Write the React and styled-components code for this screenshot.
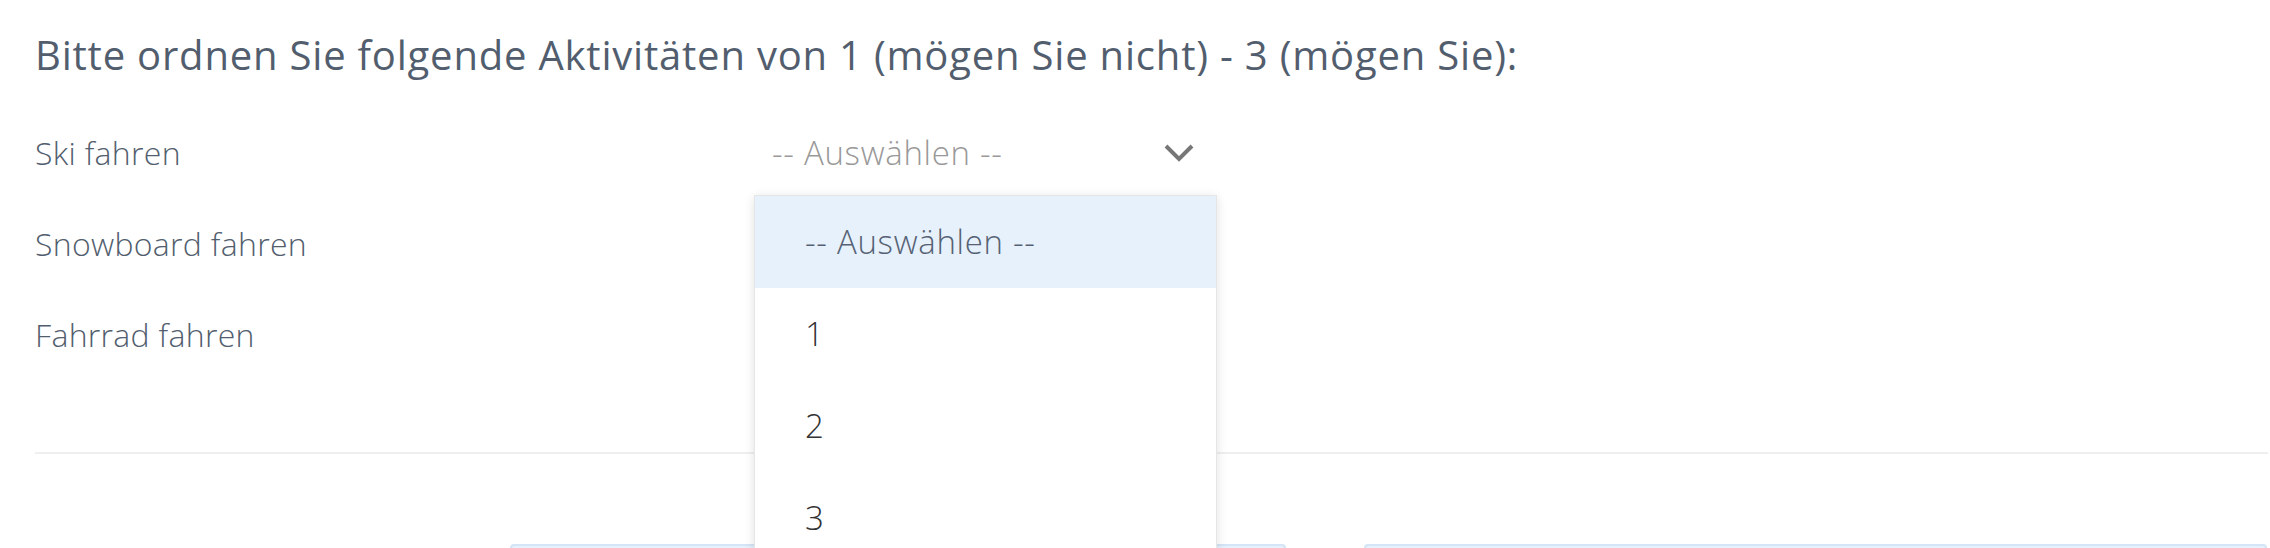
import React, { useState } from 'react';
import styled, { createGlobalStyle } from 'styled-components';

const GlobalStyle = createGlobalStyle`
	html, body {
		margin: 0;
		padding: 0;
		background: #ffffff;
		font-family: 'Open Sans', 'Noto Sans', sans-serif;
	}
`;

const Page = styled.div`
	padding: 27px 2px 0 35px;
	overflow: hidden;
	height: 548px;
	box-sizing: border-box;
`;

const Title = styled.h2`
	margin: 0 0 24px;
	font-size: 40px;
	line-height: 56px;
	font-weight: 400;
	color: #525e6e;
	letter-spacing: 0.8px;
	white-space: nowrap;
`;

const Rows = styled.div`
	display: flex;
	flex-direction: column;
`;

const Row = styled.div`
	display: grid;
	grid-template-columns: 719px 463px;
	align-items: center;
	height: 91px;
`;

const Label = styled.span`
	font-size: 32px;
	font-weight: 300;
	color: #525e6e;
	letter-spacing: 0.3px;
`;

const SelectWrap = styled.div`
	position: relative;
	z-index: ${(props) => (props.open ? 5 : 1)};
`;

const Trigger = styled.div`
	display: flex;
	align-items: center;
	justify-content: space-between;
	height: 84px;
	padding: 0 22px 0 18px;
	cursor: pointer;
	font-size: 33px;
	font-weight: 300;
	color: ${(props) => (props.empty ? '#999999' : '#333333')};
	letter-spacing: 0.7px;
`;

const Chevron = styled.svg`
	width: 32px;
	height: 20px;
	flex-shrink: 0;
`;

const Menu = styled.ul`
	position: absolute;
	top: 100%;
	left: 0;
	right: 0;
	margin: 0;
	padding: 0;
	list-style: none;
	background: #ffffff;
	border: 1px solid #e6e6e6;
	box-shadow: 0 2px 10px rgba(0, 0, 0, 0.12);
`;

const Option = styled.li`
	display: flex;
	align-items: center;
	height: 92px;
	padding: 0 0 0 50px;
	font-size: 33px;
	font-weight: 300;
	letter-spacing: 0.7px;
	color: ${(props) => (props.placeholder ? '#566274' : '#333333')};
	background: ${(props) => (props.active ? '#e6f1fc' : '#ffffff')};
	cursor: pointer;
`;

const Divider = styled.hr`
	margin: 72px 0 0;
	border: 0;
	border-top: 2px solid #efefef;
`;

const Actions = styled.div`
	display: flex;
	gap: 78px;
	margin-top: 90px;
	padding-left: 475px;
`;

const ActionButton = styled.button`
	width: ${(props) => props.width}px;
	height: 64px;
	background: #e7f1fc;
	border: 2px solid #d4e5f7;
	border-radius: 4px;
	font-family: inherit;
`;

const activities = ['Ski fahren', 'Snowboard fahren', 'Fahrrad fahren'];
const choices = ['1', '2', '3'];

function Select({ open, onToggle }) {
	const [ value, setValue ] = useState('');

	return (
		<SelectWrap open={open}>
			<Trigger empty={!value} onClick={onToggle}>
				<span>{value || '-- Auswählen --'}</span>
				<Chevron viewBox="0 0 32 20" fill="none">
					<path d="M3 3 L16 16 L29 3" stroke="#777777" strokeWidth="4" />
				</Chevron>
			</Trigger>
			{open && (
				<Menu>
					<Option placeholder active={!value} onClick={() => setValue('')}>
						-- Auswählen --
					</Option>
					{choices.map((c) => (
						<Option key={c} active={value === c} onClick={() => setValue(c)}>
							{c}
						</Option>
					))}
				</Menu>
			)}
		</SelectWrap>
	);
}

function App() {
	const [ openIndex, setOpenIndex ] = useState(0);

	return (
		<Page>
			<GlobalStyle />
			<Title>Bitte ordnen Sie folgende Aktivitäten von 1 (mögen Sie nicht) - 3 (mögen Sie):</Title>
			<Rows>
				{activities.map((a, i) => (
					<Row key={a}>
						<Label>{a}</Label>
						{i === 0 ? (
							<Select open={openIndex === i} onToggle={() => setOpenIndex(openIndex === i ? -1 : i)} />
						) : (
							<div />
						)}
					</Row>
				))}
			</Rows>
			<Divider />
			<Actions>
				<ActionButton width={776} />
				<ActionButton width={903} />
			</Actions>
		</Page>
	);
}

export default App;
